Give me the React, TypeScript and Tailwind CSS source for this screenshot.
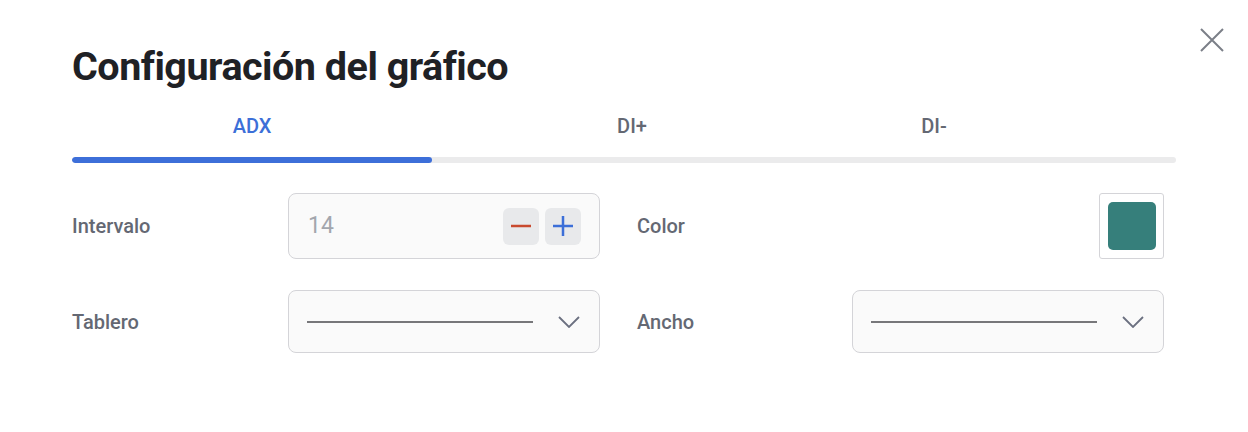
const tabs = [
  { label: "ADX", width: "w-[360px]", active: true },
  { label: "DI+", width: "w-[400px]", active: false },
  { label: "DI-", width: "w-[204px]", active: false },
];

function Chevron() {
  return (
    <svg width="22" height="12" viewBox="0 0 22 12" className="ml-auto text-[#6b7080]">
      <path d="M1 1l10 10L21 1" fill="none" stroke="currentColor" strokeWidth="1.8" />
    </svg>
  );
}

function LineSelect() {
  return (
    <div className="w-[312px] h-[63px] border border-[#d4d4d8] rounded-lg bg-[#fafafa] flex items-center pl-[18px] pr-[19px]">
      <div className="h-[2px] w-[226px] bg-[#77777a]" />
      <Chevron />
    </div>
  );
}

export default function App() {
  return (
    <div className="relative w-[1248px] h-[432px] bg-white font-['Roboto',sans-serif] px-[72px] pt-[41px]">
      <button className="absolute left-[1200px] top-[28px] text-[#7b7f88]">
        <svg width="24" height="24" viewBox="0 0 24 24" className="block">
          <path d="M1 1L23 23M23 1L1 23" stroke="currentColor" strokeWidth="2" />
        </svg>
      </button>

      <h1 className="text-[39.5px] font-bold text-[#1f2125] leading-[52px] tracking-[-0.5px]">
        Configuración del gráfico
      </h1>

      <div className="mt-[21px] w-[1104px]">
        <div className="flex">
          {tabs.map((t) => (
            <div
              key={t.label}
              className={`${t.width} text-center text-[20px] font-medium leading-[24px] ${
                t.active ? "text-[#3c6fd8]" : "text-[#646873]"
              }`}
            >
              {t.label}
            </div>
          ))}
        </div>
        <div className="mt-[19px] h-[6px] rounded-full bg-[#ebebec] overflow-hidden">
          <div className="h-full w-[360px] rounded-full bg-[#3d6fd9]" />
        </div>
      </div>

      <div className="mt-[30px] flex items-center">
        <div className="w-[216px] text-[20px] font-medium text-[#646873]">Intervalo</div>
        <div className="w-[312px] h-[66px] border border-[#d4d4d8] rounded-lg bg-[#fafafa] flex items-center pl-[19px] pr-[18px]">
          <span className="text-[23px] text-[#a3a6ad]">14</span>
          <div className="ml-auto flex gap-[6px]">
            <button className="w-[36px] h-[37px] rounded-md bg-[#e8e9eb] flex items-center justify-center text-[#c94a2e]">
              <svg width="20" height="20" viewBox="0 0 20 20">
                <path d="M0 10H20" stroke="currentColor" strokeWidth="2.5" />
              </svg>
            </button>
            <button className="w-[36px] h-[37px] rounded-md bg-[#e8e9eb] flex items-center justify-center text-[#3c6fd8]">
              <svg width="20" height="20" viewBox="0 0 20 20">
                <path d="M0 10H20M10 0V20" stroke="currentColor" strokeWidth="2.5" />
              </svg>
            </button>
          </div>
        </div>
        <div className="w-[37px]" />
        <div className="w-[215px] text-[20px] font-medium text-[#646873]">Color</div>
        <div className="w-[312px] flex justify-end">
          <div className="w-[65px] h-[66px] border border-[#d4d4d8] rounded-[3px] flex items-center justify-center">
            <div className="w-[48px] h-[48px] rounded-[5px] bg-[#367f7b]" />
          </div>
        </div>
      </div>

      <div className="mt-[31px] flex items-center">
        <div className="w-[216px] text-[20px] font-medium text-[#646873]">Tablero</div>
        <LineSelect />
        <div className="w-[37px]" />
        <div className="w-[215px] text-[20px] font-medium text-[#646873]">Ancho</div>
        <LineSelect />
      </div>
    </div>
  );
}
